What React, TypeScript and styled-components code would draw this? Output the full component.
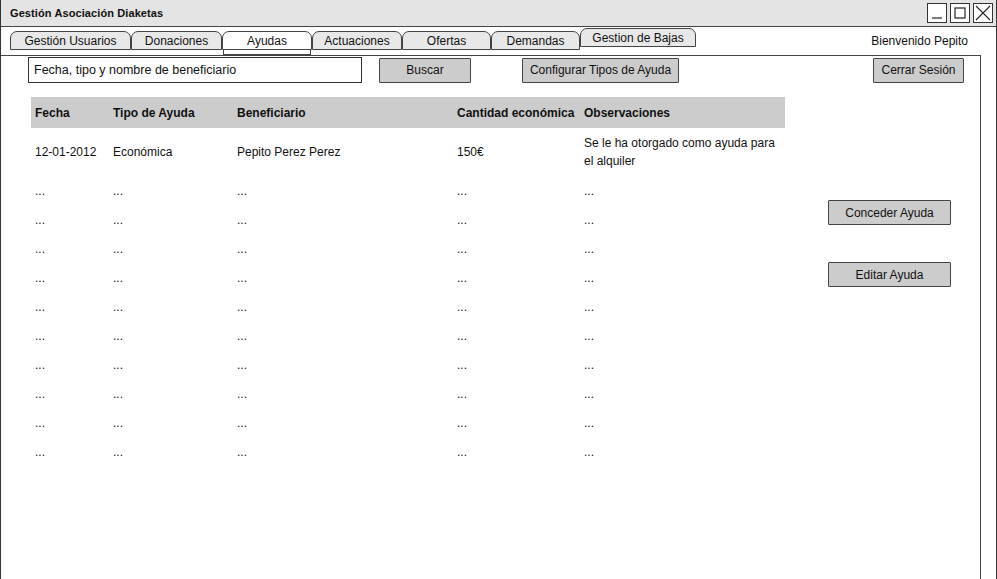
import React from "react";
import styled, { createGlobalStyle, css } from "styled-components";

const GlobalStyle = createGlobalStyle`
  html, body {
    margin: 0;
    padding: 0;
    background: #ffffff;
  }
  body {
    font-family: "Liberation Sans", Arial, sans-serif;
    color: #111;
  }
`;

// Window chrome

const Window = styled.div`
  width: 997px;
  height: 579px;
  box-sizing: border-box;
  border-left: 1px solid #333;
  border-right: 1px solid #333;
  display: flex;
  flex-direction: column;
  overflow: hidden;
  background: #fff;
`;

const TitleBar = styled.header`
  height: 27px;
  flex-shrink: 0;
  box-sizing: border-box;
  background: #e4e4e4;
  border-bottom: 1px solid #444;
  display: flex;
  align-items: center;
  justify-content: space-between;
  padding: 0 3px 0 9px;
`;

const Title = styled.h1`
  margin: 0;
  font-size: 11px;
  font-weight: bold;
  letter-spacing: 0.1px;
`;

const Controls = styled.div`
  display: flex;
  gap: 3px;
`;

const ControlBox = styled.div`
  width: 20px;
  height: 20px;
  box-sizing: border-box;
  border: 1px solid #333;
  background: #fff;
  display: flex;
  align-items: center;
  justify-content: center;
`;

// Tabs

const TabStrip = styled.nav`
  height: 28px;
  flex-shrink: 0;
  display: flex;
  align-items: flex-end;
  padding-left: 9px;
`;

const Tab = styled.div<{ $active?: boolean; $raised?: boolean; $w: number }>`
  position: relative;
  width: ${(p) => p.$w}px;
  height: 19px;
  margin-bottom: ${(p) => (p.$raised ? 8 : 5)}px;
  box-sizing: border-box;
  border: 1px solid #444;
  border-radius: 7px 7px 0 0;
  background: ${(p) => (p.$active ? "#fff" : "#e8e8e8")};
  font-size: 12px;
  display: flex;
  align-items: center;
  justify-content: center;
  padding-top: 1px;

  ${(p) =>
    p.$active &&
    css`
      &::after {
        content: "";
        position: absolute;
        left: 0;
        right: 0;
        bottom: -6px;
        height: 6px;
        box-sizing: border-box;
        border: 1px solid #444;
        background: #fff;
      }
    `}
`;

const Welcome = styled.span`
  margin-left: auto;
  margin-right: 28px;
  margin-bottom: 7px;
  font-size: 12px;
`;

// Panel

const Panel = styled.main`
  flex: 1;
  margin-right: 15px;
  border-top: 1px solid #444;
  border-right: 1px solid #444;
  display: flex;
  flex-direction: column;
  padding-top: 1px;
`;

const Toolbar = styled.div`
  display: flex;
  align-items: center;
  padding: 0 16px 0 27px;
  height: 26px;
`;

const SearchInput = styled.div`
  width: 334px;
  height: 26px;
  box-sizing: border-box;
  border: 1px solid #333;
  background: #fff;
  font-size: 12.5px;
  display: flex;
  align-items: center;
  padding-left: 5px;
`;

const Button = styled.button<{ $w: number; $ml?: number; $auto?: boolean }>`
  width: ${(p) => p.$w}px;
  height: 25px;
  box-sizing: border-box;
  border: 1px solid #444;
  border-radius: 1px;
  background: #cccccc;
  font-family: inherit;
  font-size: 12px;
  color: #111;
  padding: 0;
  margin-left: ${(p) => (p.$auto ? "auto" : `${p.$ml ?? 0}px`)};
`;

const Content = styled.div`
  display: flex;
  align-items: flex-start;
  padding: 14px 0 0 30px;
`;

const Table = styled.div`
  width: 754px;
  display: flex;
  flex-direction: column;
`;

const Row = styled.div<{ $header?: boolean; $h: number }>`
  display: grid;
  grid-template-columns: 78px 124px 220px 127px 205px;
  height: ${(p) => p.$h}px;
  align-items: center;
  font-size: 12px;
  background: ${(p) => (p.$header ? "#cccccc" : "transparent")};
  font-weight: ${(p) => (p.$header ? "bold" : "normal")};
`;

const Cell = styled.div`
  padding-left: 4px;
  line-height: 18px;
`;

const SideActions = styled.div`
  display: flex;
  flex-direction: column;
  gap: 37px;
  padding: 103px 0 0 43px;
`;

const columns = [
  "Fecha",
  "Tipo de Ayuda",
  "Beneficiario",
  "Cantidad económica",
  "Observaciones",
];

const tabs = [
  { label: "Gestión Usuarios", w: 121 },
  { label: "Donaciones", w: 91 },
  { label: "Ayudas", w: 90, active: true },
  { label: "Actuaciones", w: 90 },
  { label: "Ofertas", w: 89 },
  { label: "Demandas", w: 89 },
  { label: "Gestion de Bajas", w: 116, raised: true },
];

const App: React.FC = () => {
  return (
    <>
      <GlobalStyle />
      <Window>
        <TitleBar>
          <Title>Gestión Asociación Diaketas</Title>
          <Controls>
            <ControlBox>
              <svg width="12" height="12" viewBox="0 0 12 12">
                <path d="M1 11 H11" stroke="#222" strokeWidth="1.2" fill="none" />
              </svg>
            </ControlBox>
            <ControlBox>
              <svg width="12" height="12" viewBox="0 0 12 12">
                <rect x="1" y="1" width="10" height="10" stroke="#222" strokeWidth="1.2" fill="none" />
              </svg>
            </ControlBox>
            <ControlBox>
              <svg width="16" height="16" viewBox="0 0 16 16">
                <path d="M1 1 L15 15 M15 1 L1 15" stroke="#222" strokeWidth="1.1" fill="none" />
              </svg>
            </ControlBox>
          </Controls>
        </TitleBar>

        <TabStrip>
          {tabs.map((t) => (
            <Tab key={t.label} $w={t.w} $active={t.active} $raised={t.raised}>
              {t.label}
            </Tab>
          ))}
          <Welcome>Bienvenido Pepito</Welcome>
        </TabStrip>

        <Panel>
          <Toolbar>
            <SearchInput>Fecha, tipo y nombre de beneficiario</SearchInput>
            <Button $w={92} $ml={17}>Buscar</Button>
            <Button $w={157} $ml={51}>Configurar Tipos de Ayuda</Button>
            <Button $w={91} $auto>Cerrar Sesión</Button>
          </Toolbar>

          <Content>
            <Table>
              <Row $header $h={31}>
                {columns.map((c) => (
                  <Cell key={c}>{c}</Cell>
                ))}
              </Row>
              <Row $h={48}>
                <Cell>12-01-2012</Cell>
                <Cell>Económica</Cell>
                <Cell>Pepito Perez Perez</Cell>
                <Cell>150€</Cell>
                <Cell>
                  Se le ha otorgado como ayuda para
                  <br />
                  el alquiler
                </Cell>
              </Row>
              {Array.from({ length: 10 }).map((_, i) => (
                <Row key={i} $h={29}>
                  {columns.map((c) => (
                    <Cell key={c}>...</Cell>
                  ))}
                </Row>
              ))}
            </Table>

            <SideActions>
              <Button $w={123}>Conceder Ayuda</Button>
              <Button $w={123}>Editar Ayuda</Button>
            </SideActions>
          </Content>
        </Panel>
      </Window>
    </>
  );
};

export default App;
